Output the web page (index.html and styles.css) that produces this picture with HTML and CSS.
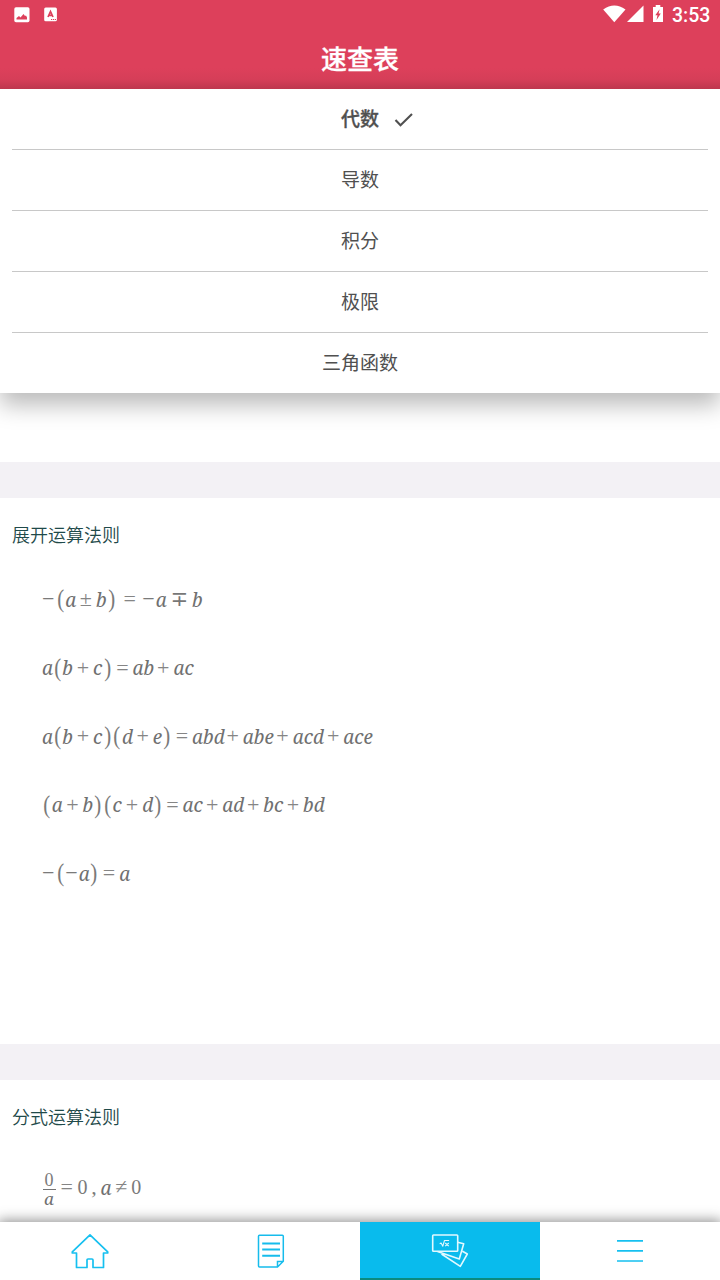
FILE: index.html
```html
<!DOCTYPE html>
<html lang="zh-CN">
<head>
<meta charset="utf-8">
<title>速查表</title>
<link rel="stylesheet" href="styles.css">
</head>
<body>
<div class="app">
  <header class="header">
    <div class="status">
      <svg class="status-left" width="60" height="30" viewBox="0 0 60 30">
        <rect x="14.3" y="7.3" width="15.2" height="15" rx="1.7" fill="#fff"/>
        <path d="M16.500 19.500v-1.500l2.500-2 1.500 1.500 3-3.500 1.500 2 1-.5 1 2v2z" fill="#dd405b"/>
        <rect x="44.200" y="7.500" width="12.700" height="13.700" rx="1.500" fill="#fff"/>
        <path d="M48 17l2.500-5.500L53 17M48.900 15.300h3.200" fill="none" stroke="#dd405b" stroke-width="1.700"/>
        <path d="M51 19.500h5" stroke="#dd405b" stroke-dasharray="1.200 .7"/>
      </svg>
      <svg class="status-right" width="66" height="30" viewBox="0 0 66 30">
        <g fill="#fff">
          <path d="M1.200 9.500Q12.300 1.500 23.500 9.500L12.300 22.300z"/>
          <path d="M25 22L41.500 5.500V22z"/>
          <path d="M51 7h2.700V5h4.600v2H61v15H51z"/>
        </g>
        <path d="M57.600 9.300l-4.300 6h2.200l-1 4.600 4.300-6.300h-2.200z" fill="#dd405b"/>
      </svg>
      <span class="clock">3:53</span>
    </div>
    <h1 class="title">速查表</h1>
  </header>

  <nav class="menu">
    <div class="menu-item selected"><span class="label">代数<svg class="check" width="20" height="16" viewBox="0 0 20 16"><path d="M1.500 8l5 5.300L18 2" fill="none" stroke="#505050" stroke-width="2.100"/></svg></span></div>
    <div class="menu-item">导数</div>
    <div class="menu-item">积分</div>
    <div class="menu-item">极限</div>
    <div class="menu-item">三角函数</div>
  </nav>

  <main class="content">
    <section class="card expand">
      <h2 class="heading">展开运算法则</h2>
      <div class="formula"><span class="neg">−</span><span class="par">(</span><i class="v1">a</i><span class="op">±</span><i class="v1">b</i><span class="par">)</span><span class="op eq">=</span><span class="neg">−</span><i class="v1 tight">a</i><span class="op mp">∓</span><i class="v1">b</i></div>
      <div class="formula"><i class="v1">a</i><span class="par">(</span><i class="v1">b</i><span class="op">+</span><i class="vc">c</i><span class="par">)</span><span class="op">=</span><i class="v2">ab</i><span class="op">+</span><i class="v2">ac</i></div>
      <div class="formula"><i class="v1">a</i><span class="par">(</span><i class="v1">b</i><span class="op">+</span><i class="vc">c</i><span class="par">)</span><span class="par">(</span><i class="v1">d</i><span class="op">+</span><i class="vc">e</i><span class="par">)</span><span class="op">=</span><i class="v3">abd</i><span class="op">+</span><i class="v3 slim">abe</i><span class="op">+</span><i class="v3">acd</i><span class="op">+</span><i class="v3">ace</i></div>
      <div class="formula"><span class="par">(</span><i class="v1">a</i><span class="op">+</span><i class="v1">b</i><span class="par">)</span><span class="par">(</span><i class="vc">c</i><span class="op">+</span><i class="v1">d</i><span class="par">)</span><span class="op">=</span><i class="v2 slim">ac</i><span class="op">+</span><i class="v2">ad</i><span class="op">+</span><i class="v2 slim">bc</i><span class="op">+</span><i class="v2">bd</i></div>
      <div class="formula"><span class="neg">−</span><span class="par">(</span><span class="neg">−</span><i class="v1">a</i><span class="par">)</span><span class="op">=</span><i class="v1">a</i></div>
    </section>
    <section class="card">
      <h2 class="heading">分式运算法则</h2>
      <div class="formula frac-row"><span class="frac"><span class="num">0</span><i class="den">a</i></span><span class="op feq">=</span><span class="zero">0</span><span class="comma">,</span><i class="v1">a</i><span class="op">≠</span><span class="zero">0</span></div>
    </section>
  </main>

  <nav class="tabs">
    <div class="tab"><svg width="40" height="38" viewBox="0 0 40 38"><path d="M20 2.800L2.300 19.800V21H6.500V35.500H17V28Q17 27 18 27h4q1 0 1 1v7.500H33.500V21H37.700V19.800z" fill="none" stroke="#16c0f0" stroke-width="1.700" stroke-linejoin="round"/></svg></div>
    <div class="tab"><svg width="30" height="38" viewBox="0 0 30 38"><path d="M4.500 3.200H27.300Q28.300 3.200 28.300 4.200V29.300L22.500 35H4.500Q3.500 35 3.500 34V4.200Q3.500 3.200 4.500 3.200zM22.500 35V29.500H28.300" fill="none" stroke="#16bcec" stroke-width="1.500"/><path d="M7.200 11.600h17.800M7.200 17.500h17.800M7.200 23.800h17.800" stroke="#16bcec" stroke-width="2"/></svg></div>
    <div class="tab active"><svg width="40" height="38" viewBox="0 0 40 38"><g fill="none" stroke="#e2f9ff" stroke-width="1.600" stroke-linejoin="round"><rect x="2.700" y="4" width="25" height="16.200" rx=".8"/><path d="M27.700 11.200L33.700 12.800 29.300 28 7.500 20.500M32.500 20.300L37.300 23 30.300 35.300 11.500 23"/><path d="M9.700 12.700l1.400-.7 1.700 3.200 1.700-5.700h4.600M15.200 12l3.600 3.200M18.800 12l-3.600 3.200" stroke-width="1.100"/></g></svg></div>
    <div class="tab"><svg width="28" height="38" viewBox="0 0 28 38"><path d="M1 8.800h26M1 18.800h26M1 29h26" stroke="#16c0f0" stroke-width="1.700"/></svg></div>
  </nav>
</div>
</body>
</html>
```
FILE: styles.css
```css
* { box-sizing: border-box; }
body { margin: 0; background: #fff; font-family: "Noto Sans CJK SC", sans-serif; }
.app { width: 720px; height: 1280px; overflow: hidden; display: flex; flex-direction: column; background: #fff; }

.header { flex: none; height: 89px; background: linear-gradient(#dd405b 68px, #d53e58 80px, #bd374e 89px); color: #fff; }
.status { height: 30px; display: flex; align-items: center; }
.status-left { margin-right: auto; }
.status-right { margin-right: 4px; }
.clock { width: 48px; font: 500 19.5px/30px Roboto, sans-serif; padding-top: 2px; }
.title { margin: 0; font-size: 26px; line-height: 56px; font-weight: 500; text-align: center; -webkit-text-stroke: .3px #fff; }

.menu { flex: none; height: 304px; padding: 0 12px; background: #fff; box-shadow: 0 12px 22px 0 rgba(0,0,0,.27); clip-path: inset(0 0 -60px 0); position: relative; z-index: 1; }
.menu-item { height: 61px; border-bottom: 1px solid #c8c8c8; color: #505050; font-size: 19px; font-weight: 400; line-height: 57px; text-align: center; }
.menu-item:last-child { border-bottom: 0; }
.selected { font-weight: 500; -webkit-text-stroke: .3px #505050; }
.label { position: relative; }
.check { position: absolute; left: 53px; top: 8px; }

.content { flex: none; height: 829px; padding-top: 69px; }
.card { border-top: 36px solid #f3f1f5; padding-left: 12px; }
.expand { height: 582px; }
.heading { margin: 0; padding-top: 20px; height: 67px; font-size: 18px; line-height: 32px; font-weight: 350; color: #1f4a4a; }
.formula { height: 68.500px; padding-left: 30px; display: flex; align-items: center; font: 22px/30px "Liberation Serif", serif; color: #7a7a7a; white-space: nowrap; }
.formula i { font-family: "Noto Serif", "Droid Serif", "Liberation Serif", serif; font-size: 19px; color: #707070; padding-top: 1px; }
.v1 { width: 10.600px; }
.v1.tight { width: 11.300px; }
.vc { width: 9.500px; }
.v2 { width: 20.800px; }
.v3 { width: 30.500px; }
.v2.slim { width: 19.500px; }
.v3.slim { width: 29.700px; }
.op { width: 20.200px; display: flex; justify-content: center; font-size: 22px; color: #858585; }
.op.eq { width: 26px; padding-left: 1px; }
.op.mp { width: 25px; font: 21px/30px "DejaVu Sans", sans-serif; color: #777; }
.neg { width: 13.500px; font-size: 22px; }
.par { width: 9.700px; display: flex; justify-content: center; transform: scale(.95, 1.12); }
.frac-row { height: 67px; padding-top: 13px; }
.frac { width: 14px; margin-top: 4px; display: flex; flex-direction: column; align-items: center; font-size: 18px; line-height: 15px; }
.num { width: 13px; height: 17px; border-bottom: 1.500px solid #757575; text-align: center; }
.formula .den { font-size: 17px; line-height: 15px; }
.op.feq { width: 21.500px; }
.zero { width: 10px; font-size: 20px; }
.comma { width: 13px; text-align: center; }

.tabs { flex: none; height: 58px; display: grid; grid-template-columns: repeat(4, 1fr); background: #fff; position: relative; box-shadow: 0 0 12px 2px rgba(0,0,0,.42); }
.tab { display: flex; justify-content: center; align-items: center; }
.active { background: #09bbed; border-bottom: 2px solid #0b8b80; }
```
